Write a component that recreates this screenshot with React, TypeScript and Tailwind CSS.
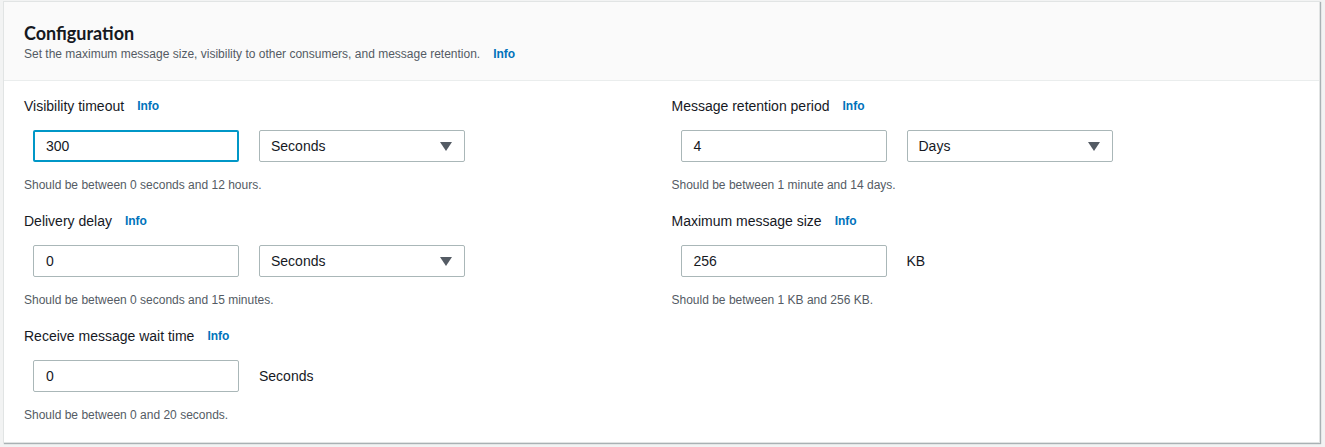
import React from 'react';

type Field = {
  label: string;
  value: string;
  unit: string;
  select?: boolean;
  focused?: boolean;
  hint: string;
};

const LEFT: Field[] = [
  { label: 'Visibility timeout', value: '300', unit: 'Seconds', select: true, focused: true, hint: 'Should be between 0 seconds and 12 hours.' },
  { label: 'Delivery delay', value: '0', unit: 'Seconds', select: true, hint: 'Should be between 0 seconds and 15 minutes.' },
  { label: 'Receive message wait time', value: '0', unit: 'Seconds', hint: 'Should be between 0 and 20 seconds.' },
];

const RIGHT: Field[] = [
  { label: 'Message retention period', value: '4', unit: 'Days', select: true, hint: 'Should be between 1 minute and 14 days.' },
  { label: 'Maximum message size', value: '256', unit: 'KB', hint: 'Should be between 1 KB and 256 KB.' },
];

function Info() {
  return <span className="text-[12px] font-bold text-[#0073bb] ml-[13px]">Info</span>;
}

function FormField({ f }: { f: Field }) {
  return (
    <div className="h-[115px]">
      <div className="flex items-center h-[22px] text-[14px] text-[#16191f]">
        {f.label}
        <Info />
      </div>
      <div className="flex items-center gap-5 mt-[13px] ml-[9px]">
        <div
          className={
            f.focused
              ? 'w-[206px] h-[32px] border-2 border-[#0097c7] rounded-[2px] flex items-center pl-[11px] text-[14px] text-[#16191f]'
              : 'w-[206px] h-[32px] border border-[#aab7b8] rounded-[2px] flex items-center pl-[12px] text-[14px] text-[#16191f]'
          }
        >
          {f.value}
        </div>
        {f.select ? (
          <div className="w-[206px] h-[32px] border border-[#aab7b8] rounded-[2px] flex items-center justify-between pl-[11px] pr-[12px] text-[14px] text-[#16191f]">
            <span>{f.unit}</span>
            <svg width="12" height="9" viewBox="0 0 12 9">
              <path d="M0 0h12L6 9z" fill="#545b64" />
            </svg>
          </div>
        ) : (
          <span className="text-[14px] text-[#16191f]">{f.unit}</span>
        )}
      </div>
      <div className="mt-[15px] text-[12px] leading-[16px] text-[#545b64]">{f.hint}</div>
    </div>
  );
}

export default function App() {
  return (
    <div className="w-[1325px] h-[447px] bg-[#f2f3f3] pl-[3px] pt-[1px] font-['Liberation_Sans',Arial,sans-serif]">
      <div className="w-[1317px] bg-white border border-[#e1e4e4] shadow-[1px_1px_1px_0_rgba(0,28,36,0.3)]">
        <div className="bg-[#fafafa] border-b border-[#eaeded] h-[79px] px-5 pt-[19px]">
          <h2 className="text-[18px] leading-[24px] font-bold text-[#16191f] font-['Lato',Arial,sans-serif]">
            Configuration
          </h2>
          <p className="text-[12px] leading-[16px] text-[#545b64] mt-[1px]">
            Set the maximum message size, visibility to other consumers, and message retention.
            <Info />
          </p>
        </div>
        <div className="grid grid-cols-2 gap-x-5 px-5 pt-[14px] pb-[2px]">
          <div>
            {LEFT.map((f) => (
              <FormField key={f.label} f={f} />
            ))}
          </div>
          <div>
            {RIGHT.map((f) => (
              <FormField key={f.label} f={f} />
            ))}
          </div>
        </div>
      </div>
    </div>
  );
}
